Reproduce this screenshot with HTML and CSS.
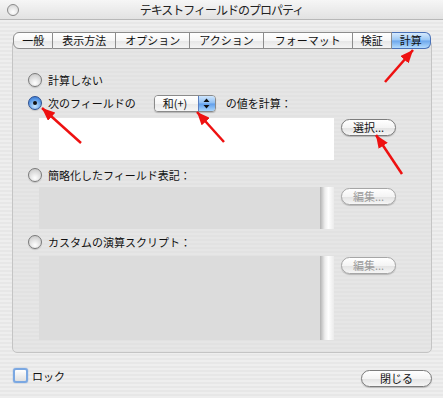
FILE: index.html
```html
<!DOCTYPE html>
<html lang="ja">
<head>
  <meta charset="UTF-8">
  <meta name="viewport" content="width=device-width, initial-scale=1.0">
  <title>テキストフィールドのプロパティ</title>
  <link rel="stylesheet" href="styles.css">
</head>
<body>

<div class="titlebar">
  <span class="light"></span>
  <span class="title">テキストフィールドのプロパティ</span>
  <span></span>
</div>

<div class="window">
  <div class="tabs">
    <div class="tab tab-short">一般</div>
    <div class="tab">表示方法</div>
    <div class="tab">オプション</div>
    <div class="tab">アクション</div>
    <div class="tab tab-wide">フォーマット</div>
    <div class="tab tab-short">検証</div>
    <div class="tab tab-short tab-on">計算</div>
  </div>

  <div class="panel">
    <div class="radio-row">
      <span class="radio"></span>計算しない
    </div>

    <div class="radio-row row-popup">
      <span class="radio radio-on"></span>次のフィールドの
      <span class="popup">
        <span class="popup-text">和(+)</span>
        <span class="popup-arrows">
          <svg width="7" height="11" viewBox="0 0 7 11"><path d="M3.5 0.5 L6.5 4 L0.5 4 Z M3.5 10.5 L6.5 7 L0.5 7 Z" fill="#111"/></svg>
        </span>
      </span>
      の値を計算：
    </div>

    <div class="field-row row-white">
      <div class="field field-white"></div>
      <button class="btn">選択...</button>
    </div>

    <div class="radio-row row-third">
      <span class="radio"></span>簡略化したフィールド表記：
    </div>

    <div class="field-row row-short">
      <div class="field field-gray"></div>
      <div class="track"></div>
      <button class="btn btn-off">編集...</button>
    </div>

    <div class="radio-row row-fourth">
      <span class="radio"></span>カスタムの演算スクリプト：
    </div>

    <div class="field-row row-tall">
      <div class="field field-gray"></div>
      <div class="track"></div>
      <button class="btn btn-off">編集...</button>
    </div>
  </div>

  <div class="footer">
    <div class="check-row"><span class="checkbox"></span>ロック</div>
    <button class="btn btn-close">閉じる</button>
  </div>
</div>

<!-- 注釈の矢印 -->
<svg class="arrows" width="443" height="398" viewBox="0 0 443 398">
  <defs>
    <marker id="head" markerUnits="userSpaceOnUse" markerWidth="13" markerHeight="11" refX="13" refY="5.5" orient="auto">
      <path d="M0 0 L13 5.5 L0 11 Z" fill="#ee1111"/>
    </marker>
  </defs>
  <line x1="385" y1="82" x2="413" y2="50" marker-end="url(#head)"/>
  <line x1="81" y1="143" x2="42" y2="108" marker-end="url(#head)"/>
  <line x1="224" y1="142" x2="197" y2="112" marker-end="url(#head)"/>
  <line x1="402" y1="174" x2="376" y2="135" marker-end="url(#head)"/>
</svg>

</body>
</html>
```

FILE: styles.css
```css
body {
  margin: 0;
  width: 443px;
  height: 398px;
  overflow: hidden;
  position: relative;
  font-family: "Noto Sans CJK JP", "Noto Sans", sans-serif;
  font-size: 11px;
  color: #111;
  background: repeating-linear-gradient(#eeeeee 0 2px, #e7e7e7 2px 4px);
}

.titlebar {
  height: 20px;
  box-sizing: border-box;
  display: grid;
  grid-template-columns: 1fr auto 1fr;
  align-items: center;
  background: linear-gradient(#f6f6f6, #e2e2e2);
  border-bottom: 1px solid #b8b8b8;
}

.light {
  justify-self: start;
  margin-left: 7px;
  width: 10px;
  height: 10px;
  border-radius: 50%;
  border: 1px solid #8a8a8a;
  background: radial-gradient(circle at 50% 70%, #ffffff, #d0d0d0);
}

.title {
  font-size: 12px;
  letter-spacing: -1px;
  color: #222;
}

.window {
  padding: 0 11px 0 12px;
}

.tabs {
  position: relative;
  z-index: 1;
  display: flex;
  justify-content: center;
  margin-top: 12px;
  height: 17px;
}

.tab {
  flex-shrink: 0;
  white-space: nowrap;
  height: 17px;
  box-sizing: border-box;
  line-height: 15px;
  padding: 0 9px;
  border: 1px solid #8c8c8c;
  border-left: none;
  background: linear-gradient(#ffffff, #f6f6f6 50%, #e6e6e6 51%, #f4f4f4);
}

.tab:first-child {
  border-left: 1px solid #8c8c8c;
  border-radius: 6px 0 0 6px;
}

.tab:last-child {
  border-radius: 0 6px 6px 0;
}

.tab-short {
  padding: 0 8px;
}

.tab-wide {
  padding: 0 11px;
}

.tab-on {
  border-color: #4a72b8;
  background: linear-gradient(#d6eafd, #99c6f4 48%, #6ba6ec 52%, #b4dcfd);
}

.panel {
  margin-top: -9px;
  height: 313px;
  box-sizing: border-box;
  padding: 32px 0 0 15px;
  border: 1px solid #c4c4c4;
  border-radius: 5px;
  background: repeating-linear-gradient(#e6e6e6 0 2px, #e2e2e2 2px 4px);
}

.radio-row {
  display: flex;
  align-items: center;
  height: 14px;
  line-height: 14px;
}

.radio {
  width: 12px;
  height: 12px;
  border-radius: 50%;
  border: 1px solid #7a7a7a;
  margin-right: 6px;
  background: radial-gradient(circle at 50% 75%, #ffffff, #d4d4d4 70%, #bcbcbc);
  box-shadow: 0 1px 1px rgba(0, 0, 0, 0.15);
  position: relative;
}

.radio-on {
  border-color: #2b4f92;
  background: radial-gradient(circle at 50% 75%, #c8e6ff, #5b9ae6 60%, #2f6cc8);
}

.radio-on::after {
  content: "";
  position: absolute;
  left: 4px;
  top: 4px;
  width: 4px;
  height: 4px;
  border-radius: 50%;
  background: #111;
}

.row-popup {
  margin-top: 7px;
  height: 18px;
}

.popup {
  display: flex;
  width: 62px;
  height: 17px;
  box-sizing: border-box;
  margin: 0 10px 0 18px;
  border: 1px solid #8a8a8a;
  border-radius: 4px;
  overflow: hidden;
  box-shadow: 0 1px 1px rgba(0, 0, 0, 0.2);
}

.popup-text {
  flex: 1;
  padding-left: 8px;
  line-height: 15px;
  background: linear-gradient(#ffffff, #f6f6f6 50%, #e8e8e8 51%, #f6f6f6);
}

.popup-arrows {
  width: 16px;
  display: flex;
  align-items: center;
  justify-content: center;
  border-left: 1px solid #5a7fc0;
  background: linear-gradient(#cfe6fd, #8cbdf2 48%, #5f9deb 52%, #a9d6fd);
}

.field-row {
  display: flex;
  align-items: flex-start;
  padding-left: 11px;
}

.row-white {
  margin-top: 6px;
}

.field-white {
  width: 295px;
  height: 42px;
  background: #ffffff;
}

.field-gray {
  width: 281px;
  background: #dcdcdc;
}

.row-short {
  margin-top: 5px;
  height: 42px;
}

.row-tall {
  margin-top: 7px;
  height: 84px;
}

.row-short .field-gray,
.row-short .track {
  height: 42px;
}

.row-tall .field-gray,
.row-tall .track {
  height: 84px;
}

.track {
  width: 14px;
  background: linear-gradient(to right, #b2b2b2, #ededed 35%, #ffffff 60%, #ebebeb);
}

.row-third {
  margin-top: 8px;
}

.row-fourth {
  margin-top: 6px;
}

.btn {
  font-family: inherit;
  font-size: 11px;
  color: #111;
  width: 55px;
  height: 17px;
  padding: 0;
  margin: 1px 0 0 7px;
  line-height: 15px;
  border: 1px solid #7c7c7c;
  border-radius: 9px;
  background: linear-gradient(#ffffff, #f4f4f4 50%, #e2e2e2 51%, #f6f6f6);
  box-shadow: 0 1px 1px rgba(0, 0, 0, 0.2);
}

.btn-off {
  color: #9a9a9a;
  border-color: #a6a6a6;
}

.footer {
  display: flex;
  justify-content: space-between;
  align-items: flex-start;
  margin-top: 15px;
}

.check-row {
  display: flex;
  align-items: center;
  height: 15px;
  margin-left: 1px;
}

.checkbox {
  width: 11px;
  height: 11px;
  margin-right: 4px;
  border: 2px solid #7ba8e2;
  border-radius: 3px;
  background: linear-gradient(#ffffff, #e0e0e0);
  box-shadow: 0 0 1px #3f78c8;
}

.btn-close {
  width: 71px;
  margin: 2px 0 0;
}

.arrows {
  position: absolute;
  left: 0;
  top: 0;
  pointer-events: none;
}

.arrows line {
  stroke: #ee1111;
  stroke-width: 2.5;
}
```
